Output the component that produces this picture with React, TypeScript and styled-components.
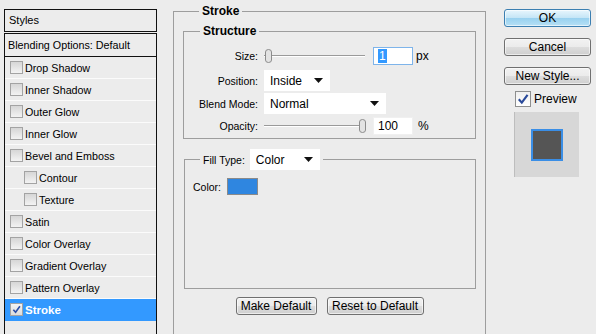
import React from 'react'
import styled, { createGlobalStyle } from 'styled-components'

const GlobalStyle = createGlobalStyle`
  html, body {
    margin: 0;
    padding: 0;
    background: #ececec;
  }
  body {
    font-family: "Liberation Sans", Arial, sans-serif;
    font-size: 10.5px;
    color: #000;
  }
`

const Dialog = styled.div`
  display: flex;
  align-items: flex-start;
  height: 334px;
  overflow: hidden;
  padding-left: 4px;
  box-sizing: border-box;
`

/* ---------- left list ---------- */

const StylesPanel = styled.div`
  width: 153px;
  margin-top: 9px;
  height: 330px;
  display: flex;
  flex-direction: column;
`

const HeaderBox = styled.div`
  border: 1px solid #111;
  height: 21px;
  line-height: 21px;
  padding-left: 4px;
  font-size: 11px;
`

const ListBox = styled.div`
  margin-top: 1px;
  border: 1px solid #111;
  border-bottom: none;
  flex: 1;
  display: flex;
  flex-direction: column;
`

const BlendRow = styled.div`
  height: 22px;
  line-height: 22px;
  padding-left: 3px;
  border-bottom: 1px solid #111;
  font-size: 10.75px;
`

const Row = styled.div<{ $indent?: boolean; $active?: boolean }>`
  height: 21px;
  border-bottom: 1px solid ${p => (p.$active ? '#3399ff' : '#fbfbfb')};
  display: flex;
  align-items: center;
  gap: 2px;
  padding-left: ${p => (p.$indent ? '19px' : '5px')};
  background: ${p => (p.$active ? '#3399ff' : 'transparent')};
  color: ${p => (p.$active ? '#fff' : '#000')};
  font-weight: ${p => (p.$active ? 'bold' : 'normal')};
  font-size: ${p => (p.$active ? '11.5px' : '10.75px')};
`

const SmallBox = styled.span<{ $checked?: boolean }>`
  width: 11px;
  height: 11px;
  border: 1px solid #a3a3a3;
  background: ${p => (p.$checked ? 'linear-gradient(#f4f4f4, #dcdcdc)' : 'linear-gradient(#d6d6d6, #f3f3f3)')};
  display: inline-flex;
  align-items: center;
  justify-content: center;
  flex: none;
`

/* ---------- center group ---------- */

const Main = styled.div`
  margin-left: 16px;
  width: 313px;
`

const Group = styled.fieldset`
  margin: 0;
  border: 1px solid #9d9d9d;
  padding: 0 9px 0 9px;
  min-width: 0;
`

const StrokeGroup = styled(Group)`
  margin-top: 4px;
  height: 340px;
  padding-top: 1px;
`

const Legend = styled.legend`
  font-weight: bold;
  font-size: 12px;
  padding: 0 3px;
  margin-left: 16px;
`

const StructureGroup = styled(Group)`
  margin-top: 5px;
  height: 107px;
  padding: 6px 0 0 0;
`

const StructLegend = styled(Legend)`
  margin-left: 16px;
`

const FillGroup = styled(Group)`
  margin-top: 10px;
  margin-left: 1px;
  height: 135px;
  padding: 3px 0 0 8px;
`

const FillLegend = styled.legend`
  padding: 0 3px;
  margin-left: 7px;
  display: flex;
  align-items: center;
  gap: 5px;
`

const Grid = styled.div`
  display: grid;
  grid-template-columns: 74px auto;
  column-gap: 6px;
  align-items: center;
`

const Label = styled.span`
  text-align: right;
`

const Line = styled.div<{ $h: number }>`
  height: ${p => p.$h}px;
  display: flex;
  align-items: center;
`

const Slider = styled.div`
  position: relative;
  width: 101px;
  height: 16px;
  margin-right: 8px;
`

const Track = styled.div`
  position: absolute;
  left: 0;
  right: 0;
  top: 7px;
  height: 1px;
  background: #9a9a9a;
  border-bottom: 1px solid #fff;
`

const Thumb = styled.div<{ $left: number }>`
  position: absolute;
  top: 1px;
  left: ${p => p.$left}px;
  line-height: 0;
`

const NumInput = styled.div<{ $focus?: boolean }>`
  width: 34px;
  height: 16px;
  background: #fff;
  border: 1px solid ${p => (p.$focus ? '#7eb4ea' : '#f0f0f0')};
  display: flex;
  align-items: center;
  padding-left: 4px;
  box-sizing: content-box;
  font-size: 12px;
`

const Sel = styled.span`
  background: #3399ff;
  color: #fff;
  padding: 0 1px;
  line-height: 14px;
`

const Unit = styled.span<{ $gap: number }>`
  margin-left: ${p => p.$gap}px;
  font-size: 12px;
`

const Select = styled.div<{ $w: number }>`
  width: ${p => p.$w}px;
  height: 21px;
  background: #fff;
  display: flex;
  align-items: center;
  justify-content: space-between;
  padding: 0 7px 0 6px;
  box-sizing: border-box;
  font-size: 12px;
`

const Arrow = () => (
  <svg width="9" height="5" viewBox="0 0 9 5">
    <path d="M0 0h9L4.5 5z" fill="#111" />
  </svg>
)

const ColorRow = styled.div`
  display: flex;
  align-items: center;
  gap: 6px;
  margin-top: 5px;
`

const Swatch = styled.div`
  width: 29px;
  height: 15px;
  background: #2f86e0;
  border: 1px solid #8a8a8a;
`

const ButtonRow = styled.div`
  display: flex;
  justify-content: center;
  gap: 10px;
  margin-top: 8px;
`

const Button = styled.button<{ $w: number; $primary?: boolean }>`
  width: ${p => p.$w}px;
  height: 18px;
  padding: 0 0 1px 0;
  font-family: "Liberation Sans", Arial, sans-serif;
  font-size: 12px;
  color: #000;
  border-radius: 3px;
  border: 1px solid ${p => (p.$primary ? '#3c7fb1' : '#707070')};
  background: ${p =>
    p.$primary
      ? 'linear-gradient(#e8f6fd 0%, #c4e5f6 50%, #98d1ef 51%, #b6e0f5 100%)'
      : 'linear-gradient(#f2f2f2 0%, #ebebeb 50%, #dddddd 51%, #cfcfcf 100%)'};
  box-shadow: inset 0 0 0 1px rgba(255, 255, 255, 0.6);
  display: flex;
  align-items: center;
  justify-content: center;
`

/* ---------- right column ---------- */

const Side = styled.div`
  margin-left: 18px;
  margin-top: 9px;
  width: 87px;
  display: flex;
  flex-direction: column;
  gap: 11px;
`

const PreviewCheck = styled.label`
  display: flex;
  align-items: center;
  gap: 3px;
  margin: -5px 0 0 11px;
  font-size: 12px;
`

const BigBox = styled.span`
  width: 14px;
  height: 14px;
  border: 1px solid #8e8f8f;
  background: linear-gradient(#f0f0f0, #fff);
  display: inline-flex;
  align-items: center;
  justify-content: center;
`

const PreviewBox = styled.div`
  margin: -6px 0 0 10px;
  width: 64px;
  height: 65px;
  background: #d7d7d7;
  border-left: 1px solid #bdbdbd;
  display: flex;
  align-items: center;
  justify-content: center;
`

const PreviewSquare = styled.div`
  width: 28px;
  height: 28px;
  background: #555;
  border: 2px solid #3a8ee6;
`

const Check = ({ color, size }: { color: string; size: number }) => (
  <svg width={size} height={size} viewBox="0 0 10 10">
    <path d="M1.5 5.2 L4 8 L8.8 1.5" fill="none" stroke={color} strokeWidth="1.8" />
  </svg>
)

const ThumbShape = () => (
  <svg width="7" height="14" viewBox="0 0 7 14">
    <path d="M0.5 3 Q0.5 0.5 3.5 0.5 Q6.5 0.5 6.5 3 V11 Q6.5 13.5 3.5 13.5 Q0.5 13.5 0.5 11 Z" fill="#e3e3e3" stroke="#8c8c8c" />
  </svg>
)

const effects: { name: string; indent?: boolean }[] = [
  { name: 'Drop Shadow' },
  { name: 'Inner Shadow' },
  { name: 'Outer Glow' },
  { name: 'Inner Glow' },
  { name: 'Bevel and Emboss' },
  { name: 'Contour', indent: true },
  { name: 'Texture', indent: true },
  { name: 'Satin' },
  { name: 'Color Overlay' },
  { name: 'Gradient Overlay' },
  { name: 'Pattern Overlay' },
]

export default function App() {
  return (
    <>
      <GlobalStyle />
      <Dialog>
        <StylesPanel>
          <HeaderBox>Styles</HeaderBox>
          <ListBox>
            <BlendRow>Blending Options: Default</BlendRow>
            {effects.map(e => (
              <Row key={e.name} $indent={e.indent}>
                <SmallBox />
                {e.name}
              </Row>
            ))}
            <Row $active>
              <SmallBox $checked>
                <Check color="#2b4fa8" size={9} />
              </SmallBox>
              Stroke
            </Row>
          </ListBox>
        </StylesPanel>

        <Main>
          <StrokeGroup>
            <Legend>Stroke</Legend>
            <StructureGroup>
              <StructLegend>Structure</StructLegend>
              <Grid>
                <Label>Size:</Label>
                <Line $h={24}>
                  <Slider>
                    <Track />
                    <Thumb $left={1}><ThumbShape /></Thumb>
                  </Slider>
                  <NumInput $focus><Sel>1</Sel></NumInput>
                  <Unit $gap={3}>px</Unit>
                </Line>
                <Label>Position:</Label>
                <Line $h={25}>
                  <Select $w={66}>Inside<Arrow /></Select>
                </Line>
                <Label>Blend Mode:</Label>
                <Line $h={21}>
                  <Select $w={122}>Normal<Arrow /></Select>
                </Line>
                <Label>Opacity:</Label>
                <Line $h={23}>
                  <Slider>
                    <Track />
                    <Thumb $left={95}><ThumbShape /></Thumb>
                  </Slider>
                  <NumInput>100</NumInput>
                  <Unit $gap={5}>%</Unit>
                </Line>
              </Grid>
            </StructureGroup>

            <FillGroup>
              <FillLegend>
                <span>Fill Type:</span>
                <Select $w={70}>Color<Arrow /></Select>
              </FillLegend>
              <ColorRow>
                Color:
                <Swatch />
              </ColorRow>
            </FillGroup>

            <ButtonRow>
              <Button $w={81}>Make Default</Button>
              <Button $w={97}>Reset to Default</Button>
            </ButtonRow>
          </StrokeGroup>
        </Main>

        <Side>
          <Button $w={87} $primary>OK</Button>
          <Button $w={87}>Cancel</Button>
          <Button $w={87}>New Style...</Button>
          <PreviewCheck>
            <BigBox><Check color="#2a4a9a" size={12} /></BigBox>
            Preview
          </PreviewCheck>
          <PreviewBox>
            <PreviewSquare />
          </PreviewBox>
        </Side>
      </Dialog>
    </>
  )
}
